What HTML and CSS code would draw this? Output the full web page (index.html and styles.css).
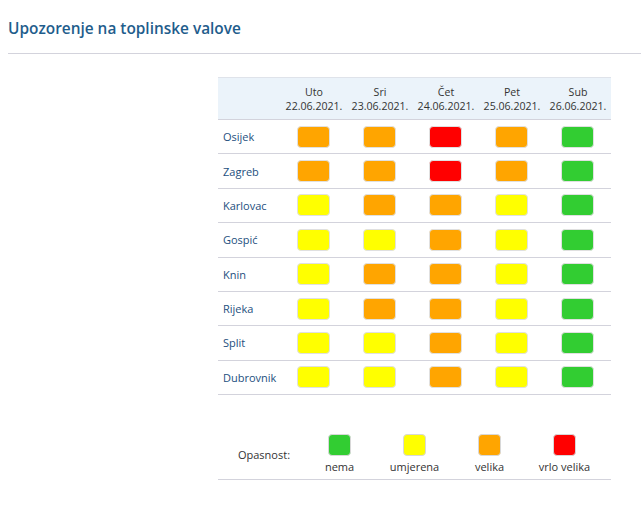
FILE: index.html
```html
<!DOCTYPE html>
<html lang="hr">
<head>
<meta charset="utf-8">
<title>Upozorenje na toplinske valove</title>
<link rel="stylesheet" href="styles.css">
</head>
<body>
<h1 class="title">Upozorenje na toplinske valove</h1>
<div class="panel">
  <div class="grid">
    <div class="head corner"></div>
    <div class="head"><span>Uto</span><span>22.06.2021.</span></div>
    <div class="head"><span>Sri</span><span>23.06.2021.</span></div>
    <div class="head"><span>Čet</span><span>24.06.2021.</span></div>
    <div class="head"><span>Pet</span><span>25.06.2021.</span></div>
    <div class="head"><span>Sub</span><span>26.06.2021.</span></div>

    <div class="city">Osijek</div>
    <div class="cell"><i class="box o"></i></div><div class="cell"><i class="box o"></i></div><div class="cell"><i class="box r"></i></div><div class="cell"><i class="box o"></i></div><div class="cell"><i class="box g"></i></div>

    <div class="city">Zagreb</div>
    <div class="cell"><i class="box o"></i></div><div class="cell"><i class="box o"></i></div><div class="cell"><i class="box r"></i></div><div class="cell"><i class="box o"></i></div><div class="cell"><i class="box g"></i></div>

    <div class="city">Karlovac</div>
    <div class="cell"><i class="box y"></i></div><div class="cell"><i class="box o"></i></div><div class="cell"><i class="box o"></i></div><div class="cell"><i class="box y"></i></div><div class="cell"><i class="box g"></i></div>

    <div class="city">Gospić</div>
    <div class="cell"><i class="box y"></i></div><div class="cell"><i class="box y"></i></div><div class="cell"><i class="box o"></i></div><div class="cell"><i class="box y"></i></div><div class="cell"><i class="box g"></i></div>

    <div class="city">Knin</div>
    <div class="cell"><i class="box y"></i></div><div class="cell"><i class="box o"></i></div><div class="cell"><i class="box o"></i></div><div class="cell"><i class="box y"></i></div><div class="cell"><i class="box g"></i></div>

    <div class="city">Rijeka</div>
    <div class="cell"><i class="box y"></i></div><div class="cell"><i class="box o"></i></div><div class="cell"><i class="box o"></i></div><div class="cell"><i class="box y"></i></div><div class="cell"><i class="box g"></i></div>

    <div class="city">Split</div>
    <div class="cell"><i class="box y"></i></div><div class="cell"><i class="box y"></i></div><div class="cell"><i class="box o"></i></div><div class="cell"><i class="box y"></i></div><div class="cell"><i class="box g"></i></div>

    <div class="city">Dubrovnik</div>
    <div class="cell"><i class="box y"></i></div><div class="cell"><i class="box y"></i></div><div class="cell"><i class="box o"></i></div><div class="cell"><i class="box y"></i></div><div class="cell"><i class="box g"></i></div>
  </div>

  <div class="legend">
    <div class="legend-label">Opasnost:</div>
    <div class="legend-item"><i class="lbox g"></i><span>nema</span></div>
    <div class="legend-item"><i class="lbox y"></i><span>umjerena</span></div>
    <div class="legend-item"><i class="lbox o"></i><span>velika</span></div>
    <div class="legend-item"><i class="lbox r"></i><span>vrlo velika</span></div>
  </div>
</div>
</body>
</html>
```

FILE: styles.css
```css
html, body {
  margin: 0;
  padding: 0;
  background: #ffffff;
}

body {
  font-family: "Open Sans", "Liberation Sans", sans-serif;
  font-size: 11px;
  color: #333333;
}

.title {
  margin: 18px 0 0 8px;
  padding: 0 0 13px 0;
  font-size: 15.4px;
  line-height: 22px;
  font-weight: 600;
  color: #1f5d8c;
  border-bottom: 1px solid #d3d3dc;
}

.panel {
  margin: 23px 0 0 218px;
  width: 393px;
}

.grid {
  display: grid;
  grid-template-columns: 63px repeat(5, 66px);
  grid-template-rows: 43px;
  grid-auto-rows: 34.375px;
}

.head {
  box-sizing: border-box;
  background: #ebf3fa;
  border-top: 1px solid #dfe3ea;
  border-bottom: 1px solid #d3d3dc;
  display: flex;
  flex-direction: column;
  align-items: center;
  justify-content: center;
  line-height: 14px;
  font-size: 10.6px;
  color: #333333;
  padding-top: 1px;
}

.city {
  box-sizing: border-box;
  border-bottom: 1px solid #d3d3dc;
  display: flex;
  align-items: center;
  padding-left: 5px;
  color: #1d4f7e;
  font-size: 11px;
}

.cell {
  box-sizing: border-box;
  border-bottom: 1px solid #d3d3dc;
  display: flex;
  align-items: center;
  justify-content: center;
  padding-right: 2px;
}

.box {
  display: block;
  width: 31px;
  height: 20px;
  border: 1px solid #e0e0e0;
  border-radius: 4px;
}

.o { background: #ffa500; }
.r { background: #ff0000; }
.g { background: #32cd32; }
.y { background: #ffff00; }

.legend {
  display: flex;
  align-items: center;
  padding: 39px 0 5px 0;
  border-bottom: 1px solid #d3d3dc;
}

.legend-label {
  width: 84px;
  box-sizing: border-box;
  padding-left: 8px;
  text-align: center;
  color: #333333;
}

.legend-item {
  width: 75px;
  display: flex;
  flex-direction: column;
  align-items: center;
  color: #333333;
  line-height: 15px;
}

.lbox {
  display: block;
  width: 21px;
  height: 20px;
  border: 1px solid #d8d8d8;
  border-radius: 4px;
  margin-bottom: 3px;
}
```
